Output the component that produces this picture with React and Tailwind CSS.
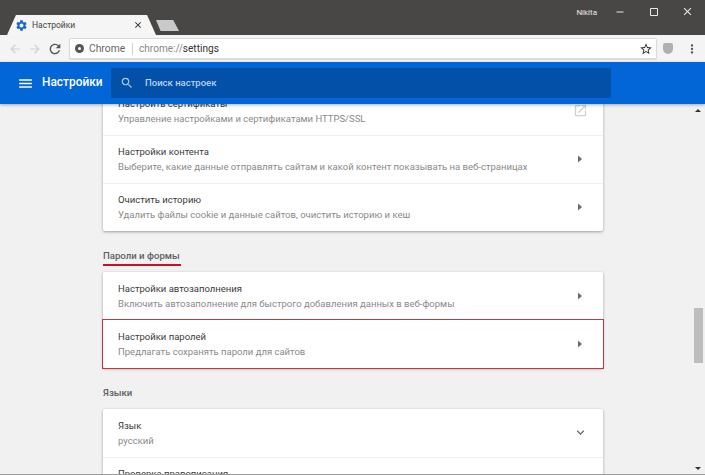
import React from 'react';
import {
  MdMenu,
  MdSearch,
  MdRefresh,
  MdArrowBack,
  MdArrowForward,
  MdStarBorder,
  MdClose,
  MdSettings,
  MdOpenInNew,
  MdKeyboardArrowDown,
  MdMoreVert,
  MdCropSquare,
  MdRemove,
} from 'react-icons/md';

const Caret = () => (
  <svg width="6" height="8" viewBox="0 0 6 8" className="shrink-0">
    <path d="M1 0.5 L5 4 L1 7.5 Z" fill="#6b6b6b" />
  </svg>
);

const Row = ({ title, sub, icon, first, boxed }) => (
  <div
    className={`flex h-12 items-center justify-between pb-[1px] pl-[15px] pr-5 ${
      boxed
        ? 'relative z-10 outline outline-1 outline-[#c8363c]'
        : first
          ? ''
          : 'border-t border-[#efefef]'
    }`}
  >
    <div className="leading-[15px]">
      <div className="text-[9.5px] text-[#3a3a3a]">{title}</div>
      <div className="text-[9.5px] text-[#8a8a8a]">{sub}</div>
    </div>
    {icon || <Caret />}
  </div>
);

const Card = ({ children }) => (
  <div className="w-[500px] shrink-0 rounded-[2px] bg-white shadow-[0_1px_3px_rgba(0,0,0,0.35)]">{children}</div>
);

const SectionLabel = ({ children, underline }) => (
  <div className="flex h-[41px] shrink-0 items-end pb-[9px]">
    <div className="relative text-[9.6px] font-medium leading-[14px] text-[#5f5f5f]">
      {children}
      {underline && <div className="absolute -bottom-[3px] left-0 h-[2px] w-[78px] bg-[#c8102e]" />}
    </div>
  </div>
);

export default function App() {
  return (
    <div className="flex h-[475px] w-[705px] flex-col overflow-hidden bg-[#f1f1f2] font-['Roboto',sans-serif]">
      {/* title bar */}
      <div className="flex h-[35px] shrink-0 items-end justify-between bg-[#494745]">
        <div className="flex items-end">
          <div className="ml-[7px] flex h-[20px] w-[149px] items-center bg-[#f5f5f5] pl-[8px] pr-[13px] [clip-path:polygon(0_100%,6%_0,94%_0,100%_100%)]">
            <MdSettings size={13} className="text-[#1a66c4]" />
            <span className="ml-[4px] flex-1 text-[8.5px] text-[#444]">Настройки</span>
            <MdClose size={10} className="text-[#222]" />
          </div>
          <div className="mb-[4px] h-[11px] w-[23px] bg-[#c9c9c9] [clip-path:polygon(0_0,75%_0,100%_100%,20%_100%)]" />
        </div>
        <div className="flex h-full items-start pt-[6px] text-[#e8e8e8]">
          <span className="mr-[17px] mt-[1px] text-[8px]">Nikita</span>
          <MdRemove size={12} className="mr-[22px]" />
          <MdCropSquare size={12} className="mr-[21px]" />
          <MdClose size={13} className="mr-[11px] -mt-[1px]" />
        </div>
      </div>

      {/* toolbar */}
      <div className="flex h-[27px] shrink-0 items-center bg-[#f4f4f4] pl-[8px]">
        <MdArrowBack size={14} className="text-[#d0d0d0]" />
        <MdArrowForward size={14} className="ml-[6px] text-[#d0d0d0]" />
        <MdRefresh size={16} className="ml-[5px] text-[#555]" />
        <div className="ml-[6px] flex h-[21px] w-[588px] items-center rounded-[2px] border border-[#dadada] bg-white pl-[5px] pr-[3px] shadow-[0_1px_1px_rgba(0,0,0,0.1)]">
          <div className="relative h-[9px] w-[9px] rounded-full bg-[#555]">
            <div className="absolute left-[3px] top-[3px] h-[3px] w-[3px] rounded-full bg-white" />
          </div>
          <span className="ml-[5px] w-[43px] text-[10.3px] text-[#666]">Chrome</span>
          <div className="mr-[6px] h-[12px] w-px bg-[#cfcfcf]" />
          <span className="text-[10.1px] text-[#888]">chrome://</span>
          <span className="text-[10.1px] text-[#333]">settings</span>
          <MdStarBorder size={14} className="ml-auto text-[#333]" />
        </div>
        <div className="ml-[6px] h-[11px] w-[10px] rounded-b-[5px] rounded-t-[2px] bg-[#b0b0b0]" />
        <MdMoreVert size={14} className="ml-[12px] text-[#555]" />
      </div>

      {/* blue header */}
      <div className="relative z-20 flex h-[42px] shrink-0 items-center bg-[#0366d6] shadow-[0_1px_3px_rgba(0,0,0,0.3)]">
        <MdMenu size={17} className="ml-[17px] text-white" />
        <span className="ml-[8px] w-[69px] text-[11.9px] font-medium text-white">Настройки</span>
        <div className="flex h-[30px] w-[500px] items-center rounded-[1px] bg-[#0250a8] pl-[9px]">
          <MdSearch size={14} className="text-[#a8c8f0]" />
          <span className="ml-[11px] text-[9.5px] font-medium text-[#b8d0ee]">Поиск настроек</span>
        </div>
      </div>

      {/* page */}
      <div className="relative flex min-h-0 flex-1 overflow-hidden border-b border-[#9a9a9a]">
        <div className="ml-[103px] -mt-[17px] flex flex-col">
          <Card>
            <Row first title="Настроить сертификаты" sub="Управление настройками и сертификатами HTTPS/SSL" icon={<MdOpenInNew size={15} className="-mr-[5px] text-[#cfcfcf]" />} />
            <Row title="Настройки контента" sub="Выберите, какие данные отправлять сайтам и какой контент показывать на веб-страницах" />
            <Row title="Очистить историю" sub="Удалить файлы cookie и данные сайтов, очистить историю и кеш" />
          </Card>
          <SectionLabel underline>Пароли и формы</SectionLabel>
          <Card>
            <Row first title="Настройки автозаполнения" sub="Включить автозаполнение для быстрого добавления данных в веб-формы" />
            <Row boxed title="Настройки паролей" sub="Предлагать сохранять пароли для сайтов" />
          </Card>
          <SectionLabel>Языки</SectionLabel>
          <Card>
            <Row first title="Язык" sub="русский" icon={<MdKeyboardArrowDown size={15} className="-mr-[5px] text-[#666]" />} />
            <Row title="Проверка правописания" sub={'\u00a0'} />
          </Card>
        </div>

        {/* scrollbar */}
        <div className="absolute right-[2px] top-[204px] h-[55px] w-[9px] bg-[#bdbdbd]" />
        <div className="absolute right-[4px] top-[5px] h-0 w-0 border-x-[3px] border-b-[3px] border-x-transparent border-b-[#333]" />
        <div className="absolute bottom-[4px] right-[4px] h-0 w-0 border-x-[3px] border-t-[3px] border-x-transparent border-t-[#333]" />
      </div>
    </div>
  );
}
